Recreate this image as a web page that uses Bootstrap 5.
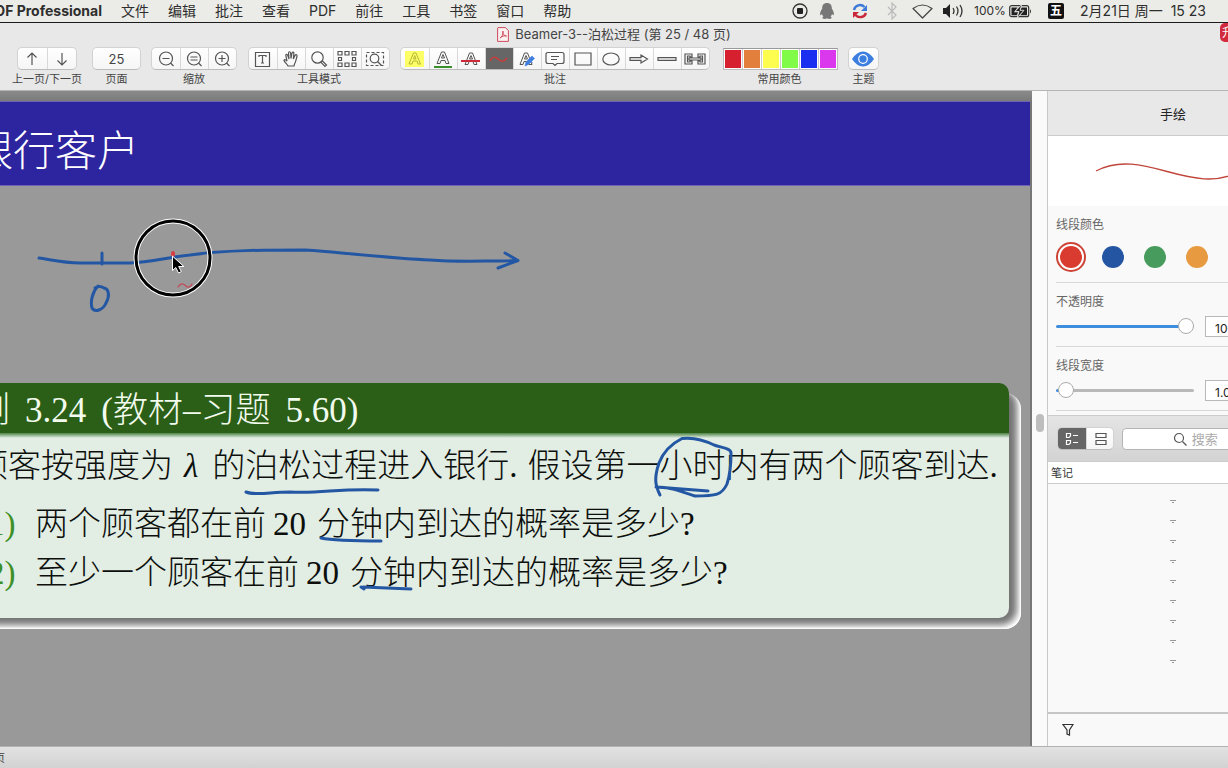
<!DOCTYPE html>
<html lang="zh-CN">
<head>
<meta charset="utf-8">
<meta name="viewport" content="width=device-width, initial-scale=1">
<title>Beamer-3--泊松过程</title>
<link href="https://cdn.jsdelivr.net/npm/bootstrap@5.3.0/dist/css/bootstrap.min.css" rel="stylesheet">
<style>
  body { font-family: Inter, "Noto Sans CJK SC", sans-serif; font-size: 12px; line-height: 16px; color: #3c3c3c; background: #e8e8e8; }
  svg { display: block; flex: none; }
  .ico { fill: none; stroke: #555; stroke-width: 1.2; }

  /* system menu bar */
  .menubar { height: 23px; background: #ebebe7; border-bottom: 1px solid #1c1c1c; font-size: 14px; color: #2e2e2e; }
  .menubar a { color: inherit; text-decoration: none; }
  .menus { gap: 19px; }
  .appname { width: 102px; }
  .tray { gap: 10px; padding-right: 22px; }
  .pct { font-size: 12px; width: 31px; }
  .ime { background: #111; color: #fff; width: 16px; height: 16px; border-radius: 2px; font-size: 12px; margin: 0 6px; }

  /* window title and toolbar */
  .titleline { height: 22px; font-size: 13px; gap: 6px; color: #444; }
  .upgrade { position: absolute; right: 0; top: 0; width: 8px; height: 19px; background: #d02a3c; color: #fff; border-radius: 5px 0 0 5px; line-height: 19px; padding-left: 2px; }
  .toolbar { height: 46px; gap: 10px; padding: 2px 0 0 12px; border-bottom: 1px solid #b4b4b4; }
  .tool-set { font-size: 11px; line-height: 18px; color: #444; }
  .tool-set.spaced { margin-left: 1px; }
  .seg { height: 23px; border-radius: 5px; background: linear-gradient(#fff, #f5f5f5); border: 1px solid #d2d2d2; border-bottom-color: #bbb; overflow: hidden; }
  .seg .btn, .seg.btn-group > .btn:not(:first-child) { width: 28px; padding: 0; margin: 0; border: 0; border-left: 1px solid #d8d8d8; border-radius: 0; display: flex; align-items: center; justify-content: center; flex: none; }
  .seg.btn-group > .btn:first-child { border-left: 0; }
  .seg.wide.btn-group > .btn { width: 29px; }
  .seg .btn.picked { background: #666; }
  .seg input { width: 47px; border: 0; background: none; text-align: center; font-size: 13px; color: #444; padding: 2px 0 0; }
  .swatches { margin: 1px 0 0 2px; border: 1px solid #bcbcbc; border-top-color: #999; height: 22px; background: #ccc; gap: 1px; }
  .swatches button { width: 18px; padding: 0; border: 1px solid #fff; }

  /* document view */
  .docview { background: #777; padding-top: 10px; }
  .docview .shade { position: absolute; inset: 0 0 auto 0; height: 10px; background: linear-gradient(#8a8a8a, #7b7b7b); }
  .sheet { margin: 0 2px 0 -64px; background: #999; font-family: "Liberation Serif", "Noto Sans CJK SC", serif; font-weight: 300; white-space: nowrap; }
  .frametitle { height: 85px; background: #2d249f; border: solid #6d62b8; border-width: 1px 0; color: #fff; font-size: 42px; line-height: 60px; padding: 20px 0 0 35px; margin: 0 0 197px; font-weight: 300; }
  .theorem { margin: 0 21px 0 20px; font-size: 33px; line-height: 48px; color: #0c0f0c; }
  .theorem::before { content: ""; position: absolute; inset: 10px -12px -11px 0; border-radius: 0 16px 16px 0; background: #747474; box-shadow: inset -4px -4px 7px #fff, inset -1px -1px 2px #fff; }
  .theorem-head { height: 50px; background: #2b5f17; border-radius: 0 10px 0 0; color: #f2fbee; font-size: 35px; line-height: 56px; padding-left: 19px; margin: 0; font-weight: 300; }
  .theorem-body { background: linear-gradient(#4f8547, #e2ede3 5px); border-radius: 0 0 10px 0; padding: 9px 0 20px 19px; }
  .theorem-body p { margin: 0 0 10px; }
  .theorem-body div { margin-bottom: 1px; }
  .gap-word { margin: 0 15px; }
  .lam { margin: 0 14px 0 11px; font-style: italic; }
  .stop { margin-right: 10px; }
  .tag { width: 60px; padding-left: 2px; color: #3d8f26; }
  .num { margin: 0 11px 0 7px; }
  .ink { position: absolute; top: 0; left: 0; fill: none; stroke: #2357a3; stroke-width: 3; stroke-linecap: round; stroke-linejoin: round; pointer-events: none; }

  .scroller { width: 15px; background: #fafafa; padding: 323px 3px 0 4px; }
  .scroller div { height: 18px; border-radius: 4px; background: #bdbdbd; }

  /* inspector, wider than the part of it that is on screen */
  .inspector { width: 181px; border-left: 1px solid #c8c8c8; background: #f9f9f9; }
  .inner { width: 250px; }
  .insp-title { height: 45px; font-size: 13px; background: #e8e8e8; border-bottom: 1px solid #cbcbcb; padding-top: 2px; color: #222; }
  .preview { height: 70px; background: #fff; }
  .prop { margin: 0 8px; border-bottom: 1px solid #d8d8d8; color: #666; height: 64px; padding-top: 11px; }
  .prop.colors { height: 77px; }
  .prop label, .prop legend { display: block; font-size: 12px; line-height: 16px; margin: 0; }
  .prop legend { float: left; width: 100%; }
  .dots { clear: both; gap: 20px; padding: 13px 4px; }
  .dots input { appearance: none; width: 22px; height: 22px; border-radius: 50%; margin: 0; background: currentColor; }
  .dots input:checked { box-shadow: 0 0 0 2px #fff, 0 0 0 4px #cc4437; }
  .slide-row { gap: 11px; padding-top: 6px; }
  .slide-row input[type=range] { width: 138px; height: 20px; padding: 0; }
  .slide-row input[type=range]::-webkit-slider-runnable-track { height: 3px; background: linear-gradient(90deg, #3f8ddd var(--fill), #b9b9b9 var(--fill)); }
  .slide-row input[type=range]::-webkit-slider-thumb { width: 16px; height: 16px; margin-top: -7px; background: #fff; border: 1px solid #aaa; }
  .slide-row input[type=text] { width: 60px; height: 21px; border: 1px solid #b8b8b8; background: #fff; font-size: 12px; padding: 3px 9px 0; color: #222; }
  .notes-bar { height: 47px; margin-top: 4px; background: linear-gradient(#e4e4e4, #d3d3d3); border: solid #ccc; border-width: 1px 0; padding: 0 9px; gap: 8px; }
  .find { width: 170px; height: 22px; border: 1px solid #b5b5b5; border-radius: 4px; background: #fff; padding-left: 50px; gap: 5px; }
  .find input { border: 0; padding: 0; width: 90px; font-size: 13px; background: none; }
  .find input::placeholder { color: #aaa; opacity: 1; }
  .notes-head { height: 22px; line-height: 22px; font-size: 11px; background: #fff; border-bottom: 1px solid #ccc; padding-left: 3px; color: #333; }
  .notes-list { list-style: none; padding: 16px 0 0 0; margin: 0; }
  .notes-list li { height: 20px; }
  .filter { height: 34px; border-top: 2px solid #c6c6c6; padding-left: 14px; }
  .statusbar { height: 22px; font-size: 11px; background: linear-gradient(#e2e2e2, #d2d2d2); border-top: 1px solid #b2b2b2; }
  .statusbar span { width: 5px; }
</style>
</head>
<body class="vh-100 d-flex flex-column overflow-hidden">

<nav class="menubar d-flex align-items-center flex-shrink-0 text-nowrap">
  <div class="menus d-flex">
    <div class="appname d-flex justify-content-end overflow-hidden"><a href="#" class="fw-bold">PDF Professional</a></div>
    <a href="#">文件</a><a href="#">编辑</a><a href="#">批注</a><a href="#">查看</a><a href="#">PDF</a><a href="#">前往</a><a href="#">工具</a><a href="#">书签</a><a href="#">窗口</a><a href="#">帮助</a>
  </div>
  <div class="tray d-flex align-items-center ms-auto">
    <svg width="16" height="16"><circle cx="8" cy="8" r="7" fill="none" stroke="#333" stroke-width="1.3"/><rect x="5" y="5" width="6" height="6" rx="1" fill="#222"/></svg>
    <svg width="18" height="18"><path d="M9 1C5.800 1 4 3.200 4.200 6.500 3 8.500 1.600 11 2.200 13c.5.700 1.400-.5 1.800-1 .2 1.200.8 2 1.500 2.600-1.500.5-1.700 2 0 2.200 1.300.2 2.700 0 3.500-.5.800.5 2.200.7 3.500.5 1.700-.2 1.500-1.700 0-2.200.7-.6 1.300-1.400 1.500-2.600.4.500 1.300 1.700 1.800 1 .6-2-.8-4.500-2-6.500C14 3.200 12.200 1 9 1z" fill="#777"/></svg>
    <svg width="30" height="18" fill="none" stroke-width="2.400"><path d="M8 8c1-5 7-6.500 10.500-3" stroke="#3b78d8"/><path d="M21 3v6h-6z" fill="#3b78d8"/><path d="M20 11c-1.500 4.500-7.500 5.500-10.500 2" stroke="#c9273a"/><path d="M7 16v-6h6z" fill="#c9273a"/></svg>
    <svg width="16" height="18"><path d="M2 5l8 8-4 4V1l4 4-8 8" fill="none" stroke="#bbb" stroke-width="1.200"/></svg>
    <svg width="21" height="18"><path d="M1 6.500Q10.500-.5 20 6.500L10.500 16z" fill="none" stroke="#444" stroke-width="1.200" stroke-linejoin="round"/></svg>
    <svg width="21" height="18"><path d="M0 6h3l4-4v14l-4-4H0z" fill="#222"/><path d="M10 6q2 3 0 6M13.500 4.500q3 4.500 0 9M17 3q4 6 0 12" fill="none" stroke="#333" stroke-width="1.300"/></svg>
    <div class="d-flex align-items-center gap-1"><span class="pct">100%</span>
    <svg width="23" height="14"><rect x=".700" y="1.700" width="19" height="11" rx="2" fill="none" stroke="#333" stroke-width="1.200"/><path d="M2.500 3.500h6L5 8.200h4l-1 3H2.500zM18 3.500v7.700h-7L15 6.500h-3.500l1-3z" fill="#222"/><path d="M13 0L6 7.500h4L8 14l7-7.700h-4z" fill="#222" stroke="#ebebe7" stroke-width=".8"/><path d="M21 5v4.500q2-2.200 0-4.500" fill="#333"/></svg></div>
    <span class="ime d-flex align-items-center justify-content-center fw-bold">五</span>
    <span>2月21日 周一&nbsp; 15 23</span>
  </div>
</nav>

<header class="position-relative flex-shrink-0">
  <div class="titleline d-flex align-items-center justify-content-center">
    <svg width="12" height="15"><path d="M1 .600h7.500L11.400 3.500v10.900H.6V1z" fill="#fbeff0" stroke="#cf4a5c"/><path d="M3 11c2-1 3.500-4 3-7-1 1 .5 5 3.500 5-2-.5-4.500 0-6.500 2z" fill="none" stroke="#cf4a5c"/></svg>
    <span>Beamer-3--泊松过程 (第 25 / 48 页)</span>
  </div>
  <div class="upgrade overflow-hidden text-nowrap">升级</div>
  <div class="toolbar d-flex align-items-start text-nowrap">
    <div class="tool-set d-flex flex-column align-items-center">
      <div class="seg wide btn-group" role="group" aria-label="上一页/下一页">
        <button class="btn" aria-label="上一页"><svg class="ico" width="16" height="16"><path d="M8 14V2M3.500 6.500L8 2l4.500 4.500"/></svg></button>
        <button class="btn" aria-label="下一页"><svg class="ico" width="16" height="16"><path d="M8 2v12M3.500 9.500L8 14l4.500-4.500"/></svg></button>
      </div>上一页/下一页
    </div>
    <div class="tool-set d-flex flex-column align-items-center">
      <div class="seg"><input id="pageno" type="text" value="25"></div><label for="pageno">页面</label>
    </div>
    <div class="tool-set d-flex flex-column align-items-center">
      <div class="seg btn-group" role="group" aria-label="缩放">
        <button class="btn" aria-label="缩小"><svg class="ico" width="18" height="18"><circle cx="9" cy="8.500" r="6.500"/><path d="M13.500 13l3 3M5.500 8.500h7"/></svg></button>
        <button class="btn" aria-label="实际大小"><svg class="ico" width="18" height="18"><circle cx="9" cy="8.500" r="6.500"/><path d="M13.500 13l3 3M5.500 7h7M5.500 10h7"/></svg></button>
        <button class="btn" aria-label="放大"><svg class="ico" width="18" height="18"><circle cx="9" cy="8.500" r="6.500"/><path d="M13.500 13l3 3M5.500 8.500h7M9 5v7"/></svg></button>
      </div>缩放
    </div>
    <div class="tool-set spaced d-flex flex-column align-items-center">
      <div class="seg btn-group" role="group" aria-label="工具模式">
        <button class="btn" aria-label="文本"><svg class="ico" width="18" height="18"><path d="M1.500 2.500h14v14h-14zM5 7V5.500h7V7M8.500 5.500V13M7 13h3"/></svg></button>
        <button class="btn" aria-label="移动"><svg class="ico" width="18" height="18"><path d="M6 16c-1-2-3.500-4-4-5.500.2-1.300 1.800-1 3 .7L3.800 5.500c-.1-1.500 1.500-1.700 2 0L7 9 6.500 3C6.600 1.300 8.300 1.300 8.600 3L9 8.500 10 3c.5-1.400 2-1.100 1.900.4L11.300 9l1.800-3.700c.9-1.300 2.300-.5 1.900 1-.9 2.700-1 5.200-2.500 7.700L12 16z"/></svg></button>
        <button class="btn" aria-label="放大镜"><svg class="ico" width="18" height="18"><circle cx="7.500" cy="7.500" r="5.700"/><path d="M11.500 11.500l1-.5 4 4-1.500 1.500-4-4z"/></svg></button>
        <button class="btn" aria-label="选择"><svg class="ico" width="20" height="18"><path d="M1 1.500h4v3.500H1zM8 1.500h4v3.500H8zM15 1.500h4v3.500h-4zM1 13h4v3.500H1zM8 13h4v3.500H8zM15 13h4v3.500h-4zM1.500 7.500h3v3h-3zM15.500 7.500h3v3h-3z"/></svg></button>
        <button class="btn" aria-label="缩放选区"><svg class="ico" width="20" height="18"><path d="M1.500 2.500h17v13h-17z" stroke-dasharray="3 2"/><circle cx="9.500" cy="8.500" r="4.300" fill="#fbfbfb"/><path d="M12.500 11.500l4 4"/></svg></button>
      </div>工具模式
    </div>
    <div class="tool-set d-flex flex-column align-items-center">
      <div class="seg btn-group" role="group" aria-label="批注">
        <button class="btn" aria-label="高亮"><svg width="20" height="18"><path d="M0 1h19v16H0z" fill="#fdff66"/><path d="M4 14L8.500 3h2.500l4.500 11h-2.500l-1-3h-4l-1 3zM8.500 9h2.500L9.700 5.500z" fill="none" stroke="#b5b53b"/></svg></button>
        <button class="btn" aria-label="下划线"><svg width="20" height="20"><path d="M4 14.500L8.500 3h3L16 14.500h-3l-1-3H8l-1 3zM8.500 9h3L10 5.500z" fill="none" stroke="#555"/><path d="M1 18h18" stroke="#3c8f2d" stroke-width="2"/></svg></button>
        <button class="btn" aria-label="删除线"><svg width="20" height="18"><path d="M4 14.500L8.500 3h3L16 14.500h-3l-1-3H8l-1 3zM8.500 9h3L10 5.500z" fill="none" stroke="#555"/><path d="M0 11h19" stroke="#cc2c3a" stroke-width="2"/></svg></button>
        <button class="btn picked" aria-label="手绘"><svg width="20" height="18"><path d="M1 11C3 7 6 6 9 9s6 3 9-1" fill="none" stroke="#cc3b3b" stroke-width="1.500"/></svg></button>
        <button class="btn" aria-label="文本编辑"><svg width="20" height="18"><path d="M3 14.500L7.500 3h3L15 14.500h-3l-1-3H7l-1 3zM7.500 9h3L9 5.500z" fill="none" stroke="#555"/><path d="M8 16l1-4 6-6 2.500 2.500-6 6zM11 10l5 3" fill="#3f7fe0" stroke="#3f7fe0" stroke-width=".6"/></svg></button>
        <button class="btn" aria-label="附注"><svg class="ico" width="20" height="18"><path d="M3 2.500h14q2 0 2 2v7q0 2-2 2h-5L10 15.500 8 13.500H3q-2 0-2-2v-7q0-2 2-2zM6 6.500h8M6 9.500h6"/></svg></button>
        <button class="btn" aria-label="矩形"><svg class="ico" width="18" height="18"><path d="M1 3h16v12H1z"/></svg></button>
        <button class="btn" aria-label="椭圆"><svg class="ico" width="18" height="18"><ellipse cx="9" cy="9" rx="8.200" ry="6"/></svg></button>
        <button class="btn" aria-label="箭头"><svg class="ico" width="20" height="18"><path d="M1 7.700h11V5l6.500 4-6.500 4v-2.700H1z"/></svg></button>
        <button class="btn" aria-label="直线"><svg class="ico" width="20" height="18"><path d="M1 7.700h18v2.600H1z"/></svg></button>
        <button class="btn" aria-label="链接"><svg class="ico" width="22" height="18"><path d="M8 7V4H1v10h7v-3H6v1H3.500V6H6v1zM14 7V4h7v10h-7v-3h2v1h2.500V6H16v1zM5 8h12v2H5z"/></svg></button>
      </div>批注
    </div>
    <div class="tool-set spaced d-flex flex-column align-items-center">
      <div class="swatches d-flex">
        <button style="background:#d6202f" aria-label="红"></button><button style="background:#e37f3c" aria-label="橙"></button><button style="background:#fdfd4f" aria-label="黄"></button><button style="background:#80fb48" aria-label="绿"></button><button style="background:#1a2ff0" aria-label="蓝"></button><button style="background:#d938ec" aria-label="紫"></button>
      </div>常用颜色
    </div>
    <div class="tool-set d-flex flex-column align-items-center">
      <div class="seg wide btn-group"><button class="btn" aria-label="主题"><svg width="22" height="16"><path d="M0 8Q5 .5 11 .5T22 8q-5 7.500-11 7.500T0 8z" fill="#3c7ee0"/><circle cx="11" cy="8" r="4.300" fill="none" stroke="#fff" stroke-width="1.200"/></svg></button></div>主题
    </div>
  </div>
</header>

<main class="d-flex flex-grow-1 overflow-hidden">
  <section class="docview flex-grow-1 position-relative overflow-hidden d-flex flex-column">
    <div class="shade"></div>
    <article class="sheet flex-grow-1">
      <h1 class="frametitle">银行客户</h1>
      <div class="theorem position-relative">
        <h2 class="theorem-head position-relative">例<span class="gap-word">3.24</span>(教材–习题<span class="gap-word me-0">5.60)</span></h2>
        <div class="theorem-body position-relative">
          <p>顾客按强度为<span class="lam">λ</span>的泊松过程进入银行<span class="stop">.</span>假设第一小时内有两个顾客到达.</p>
          <div class="d-flex"><span class="tag">(1)</span><span>两个顾客都在前<span class="num">20</span>分钟内到达的概率是多少?</span></div>
          <div class="d-flex"><span class="tag">(2)</span><span>至少一个顾客在前<span class="num">20</span>分钟内到达的概率是多少?</span></div>
        </div>
      </div>
    </article>
    <!-- freehand annotations -->
    <svg class="ink" width="1032" height="655" viewBox="0 91 1032 655">
      <path d="M39 258C52 260 65 263 80 263L130 263C150 262 170 257 190 255 225 250 265 250 305 250 340 252 385 258 430 260 455 262 480 261 500 261L518 260.500M505 253L518 260.500 498 268M102 253V264"/>
      <path d="M98 286C93 291 90 301 92 308 95 313 103 310 106 303 110 296 109 289 104 288 101 286 98 286 95 288"/>
      <path d="M246 492C256 496 270 492 290 492 320 494 340 488 378 490M321 538C335 541 355 541 381 541M361 587L364 589 363 587 411 589"/>
      <path d="M660 495C655 485 654 478 659 463 664 450 673 443 682 438.500 694 437 704 440 714 445 722 448 731 448 731 453 731 463 730 475 727 484 722 495 716 496 695 496 680 491 670 487 656 487L708 491"/>
      <circle cx="173" cy="258" r="37" stroke="#fff" stroke-width="5"/><circle cx="173" cy="258" r="37" stroke="#000"/>
      <ellipse cx="173" cy="254" rx="2" ry="3" fill="#d63f45" stroke="none"/>
      <path d="M178 287C181 282 184 284 186 286S191 287 192 284" stroke="#c44a58" stroke-width="1.300"/>
      <path d="M172.500 256.500v14l3.300-3 2.700 5.500 2.800-1.400-2.600-5.100h4.800z" fill="#000" stroke="#fff" stroke-width="1"/>
    </svg>
  </section>

  <div class="scroller flex-shrink-0"><div></div></div>

  <aside class="inspector flex-shrink-0 overflow-hidden">
    <div class="inner h-100 d-flex flex-column">
      <div class="insp-title d-flex align-items-center justify-content-center flex-shrink-0">手绘</div>
      <div class="preview flex-shrink-0"><svg width="250" height="70"><path d="M48 35C95 10 145 62 192 35" fill="none" stroke="#c0463c" stroke-width="1.300"/></svg></div>
      <fieldset class="prop colors flex-shrink-0">
        <legend>线段颜色</legend>
        <div class="dots d-flex">
          <input type="radio" name="ink" aria-label="红" style="color:#d93b30" checked><input type="radio" name="ink" aria-label="蓝" style="color:#2355a2"><input type="radio" name="ink" aria-label="绿" style="color:#479c5d"><input type="radio" name="ink" aria-label="橙" style="color:#e79a3f">
        </div>
      </fieldset>
      <div class="prop flex-shrink-0">
        <label for="opacity">不透明度</label>
        <div class="slide-row d-flex align-items-center"><input id="opacity" class="form-range" type="range" value="100" style="--fill:95%"><input type="text" value="100 %" aria-label="不透明度"></div>
      </div>
      <div class="prop flex-shrink-0">
        <label for="linew">线段宽度</label>
        <div class="slide-row d-flex align-items-center"><input id="linew" class="form-range" type="range" value="2" style="--fill:5%"><input type="text" value="1.0 pt" aria-label="线段宽度"></div>
      </div>
      <div class="notes-bar d-flex align-items-center flex-shrink-0">
        <div class="seg btn-group" role="group" aria-label="视图">
          <button class="btn picked" aria-label="列表"><svg width="14" height="14" fill="none" stroke="#fff" stroke-width="1.200"><path d="M1.500 1.500h4V4l-1.500 1.500H1.500zM1.500 8.500h4V11L4 12.500H1.500zM8 3.500h5M8 10.500h5"/></svg></button>
          <button class="btn" aria-label="卡片"><svg class="ico" width="14" height="14"><path d="M2 1.500h10V5.500H2zM2 8.500h10v4H2z"/></svg></button>
        </div>
        <div class="find d-flex align-items-center"><svg class="ico" width="14" height="14"><circle cx="6" cy="6" r="4.500"/><path d="M9.500 9.500l4 4"/></svg><input type="text" placeholder="搜索" aria-label="搜索"></div>
      </div>
      <div class="notes-head flex-shrink-0">笔记</div>
      <ul class="notes-list flex-grow-1">
        <li></li><li></li><li></li><li></li><li></li><li></li><li></li><li></li><li></li>
      </ul>
      <div class="filter d-flex align-items-center flex-shrink-0"><svg width="12" height="14" fill="none" stroke="#333" stroke-width="1.200"><path d="M1 1.500h10L7.500 7v5L5 11V7z"/></svg></div>
    </div>
  </aside>
</main>

<footer class="statusbar d-flex align-items-center flex-shrink-0"><span class="d-flex justify-content-end overflow-hidden text-nowrap">第 25 页</span></footer>

<script>
  document.querySelectorAll('.notes-list li').forEach(li => {
    li.className = 'd-flex justify-content-center';
    li.innerHTML = '<svg width="6" height="4"><path d="M0 .500h6M2 2.500h2" stroke="#999"/></svg>';
  });
</script>
<script src="https://cdn.jsdelivr.net/npm/bootstrap@5.3.0/dist/js/bootstrap.bundle.min.js"></script>
</body>
</html>
